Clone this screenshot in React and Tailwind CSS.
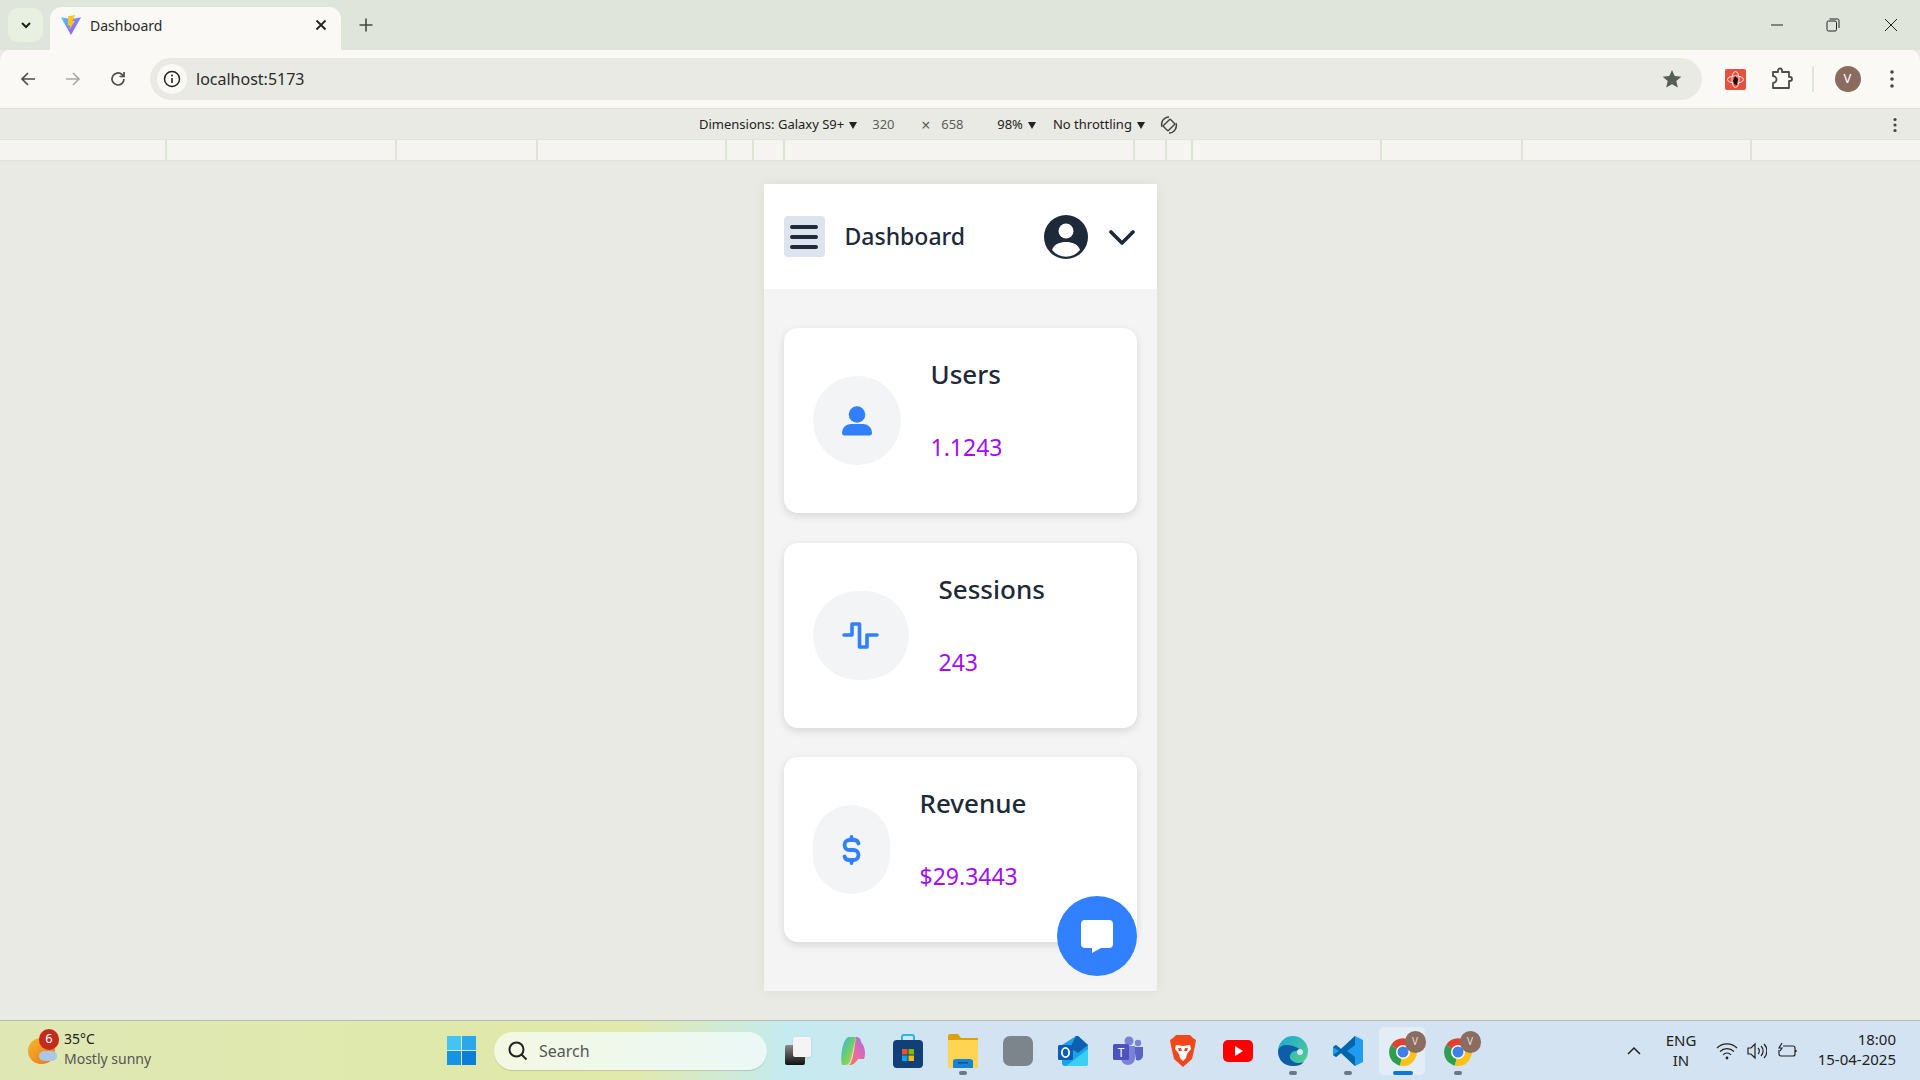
import React from 'react';

const rulerCells = [167, 230, 141, 189, 27, 31, 350, 32, 26, 189, 141, 229];

const ViteLogo = () => (
    <svg width="22" height="22" viewBox="0 0 24 24">
        <defs>
            <linearGradient id="vite-a" x1="0" y1="0" x2="1" y2="1">
                <stop offset="0" stopColor="#41d1ff" />
                <stop offset="1" stopColor="#bd34fe" />
            </linearGradient>
        </defs>
        <path d="M1 3.5 12 23 23 3.5 12 5.5Z" fill="url(#vite-a)" />
        <path d="M16.5 1 9 2.5l-.6 10 2.6-.6-.7 4.6 6-9-2.9.5Z" fill="#ffc517" />
    </svg>
);

const Chrome = () => (
    <svg width="32" height="32" viewBox="0 0 32 32">
        <path d="M16 16 4 9A14 14 0 0 1 28 9Z" fill="#e2412f" />
        <path d="M16 16 4 9A14 14 0 0 0 13 29.7Z" fill="#2f9e4f" />
        <path d="M16 16 28 9A14 14 0 0 1 13 29.7Z" fill="#fbc11b" />
        <circle cx="16" cy="16" r="7" fill="#fff" />
        <circle cx="16" cy="16" r="5.5" fill="#3f7fe8" />
    </svg>
);

const ChromeBadge = () => (
    <div className="relative flex h-[34px] w-[32px] items-end">
        <Chrome />
        <div className="absolute -right-[7px] -top-[3px] flex h-[22px] w-[21px] items-center justify-center rounded-full bg-[#8a6d60] text-[10px] text-[#e9ddd6]">V</div>
    </div>
);

const Copilot = () => (
    <svg width="30" height="30" viewBox="0 0 30 30">
        <defs>
            <linearGradient id="cop-a" x1="0" y1="0" x2="1" y2="1">
                <stop offset="0" stopColor="#2fb5e8" />
                <stop offset="0.5" stopColor="#6fcf6a" />
                <stop offset="1" stopColor="#f4c12e" />
            </linearGradient>
            <linearGradient id="cop-b" x1="1" y1="0" x2="0" y2="1">
                <stop offset="0" stopColor="#a56bf0" />
                <stop offset="0.6" stopColor="#ef6a9a" />
                <stop offset="1" stopColor="#f47a3c" />
            </linearGradient>
        </defs>
        <path d="M10 1h8l-5 22c-1 4-3 6-6 6H4C2 22 4 5 10 1Z" fill="url(#cop-a)" />
        <path d="M18 1c3 0 5 2 5 5 4 4 5 12 3 17h-6c-3 5-6 6-9 6 3-2 4-7 7-28Z" fill="url(#cop-b)" />
    </svg>
);

const Store = () => (
    <svg width="30" height="34" viewBox="0 0 30 34">
        <path d="M9 7V3a2 2 0 0 1 2-2h8a2 2 0 0 1 2 2v4" fill="none" stroke="#2fb4e8" strokeWidth="2" />
        <rect y="6" width="30" height="28" rx="4" fill="#123f78" />
        <rect x="9" y="15" width="5.5" height="5.5" fill="#f25022" />
        <rect x="15.5" y="15" width="5.5" height="5.5" fill="#7fba00" />
        <rect x="9" y="21.5" width="5.5" height="5.5" fill="#00a4ef" />
        <rect x="15.5" y="21.5" width="5.5" height="5.5" fill="#ffb900" />
    </svg>
);

const Folder = () => (
    <svg width="30" height="34" viewBox="0 0 30 34">
        <path d="M0 2a2 2 0 0 1 2-2h8l3 4h17v8H0Z" fill="#dca20e" />
        <rect y="6" width="30" height="28" rx="1" fill="#fdd552" />
        <path d="M5 34v-6a3 3 0 0 1 3-3h14a3 3 0 0 1 3 3v6Z" fill="#1583d8" />
        <rect x="10" y="28" width="10" height="1.5" fill="#0c4f8a" />
    </svg>
);

const Outlook = () => (
    <svg width="30" height="32" viewBox="0 0 30 32">
        <path d="M4 10 18 1h2l10 9v18a3 3 0 0 1-3 3H7a3 3 0 0 1-3-3Z" fill="#1aa3e8" />
        <path d="M18 1h2l10 9-10 8-8-5Z" fill="#0f5fb0" />
        <path d="M8 31 30 14v14a3 3 0 0 1-3 3Z" fill="#3ad0f5" />
        <rect y="10" width="15" height="15" rx="1.5" fill="#0b5cb5" />
        <ellipse cx="7.5" cy="17.5" rx="3.6" ry="4.6" fill="none" stroke="#fff" strokeWidth="1.8" />
    </svg>
);

const Teams = () => (
    <svg width="30" height="30" viewBox="0 0 30 30">
        <circle cx="25" cy="7" r="3.2" fill="#7b83d8" />
        <circle cx="16" cy="5" r="4.5" fill="#7b83d8" />
        <path d="M21 11h9v9a5 5 0 0 1-7 4Z" fill="#5a62c3" />
        <path d="M8 10h14v12a7 7 0 0 1-14 0Z" fill="#7b83d8" />
        <rect y="8" width="16" height="16" rx="1.5" fill="#4b53bc" />
        <text x="8" y="21" textAnchor="middle" fontSize="12" fill="#fff" fontFamily="Noto Sans, sans-serif">T</text>
    </svg>
);

const Brave = () => (
    <svg width="26" height="32" viewBox="0 0 26 32">
        <path d="M6 0h14l3 3 3 2-1 6-3 13-9 8-9-8L1 11 0 5l3-2Z" fill="#f1471d" />
        <path d="M6 10c3 0 5 1 7 1s4-1 7-1l1 4-4 5-1 4-3 3-3-3-1-4-4-5Z" fill="#fff" />
        <path d="M8 13h3l1 3H9ZM18 13h-3l-1 3h3Z" fill="#f1471d" />
    </svg>
);

const YouTube = () => (
    <svg width="30" height="22" viewBox="0 0 30 22">
        <rect width="30" height="22" rx="5" fill="#ff0000" />
        <path d="M12 6l8 5-8 5Z" fill="#fff" />
    </svg>
);

const Edge = () => (
    <svg width="30" height="32" viewBox="0 0 30 32">
        <defs>
            <linearGradient id="edge-a" x1="0" y1="0" x2="1" y2="1">
                <stop offset="0" stopColor="#1aa8d8" />
                <stop offset="1" stopColor="#57d186" />
            </linearGradient>
        </defs>
        <circle cx="15" cy="16" r="15" fill="url(#edge-a)" />
        <path d="M0 16C0 26 7 31 15 31c5 0 8-1 11-4-5 2-12 1-14-4-1-4 3-8 8-7 2 0 2-2 0-3C12 9 2 8 0 16Z" fill="#0f5ca8" />
        <circle cx="22" cy="17" r="3" fill="#dbe6f2" />
    </svg>
);

const VSCode = () => (
    <svg width="30" height="30" viewBox="0 0 30 30">
        <path d="M22 0 30 4v22l-8 4-14-13-5 4-3-2v-8l3-2 5 4Z" fill="#1f9cf0" />
        <path d="M22 0 8 13 3 9 0 11l6 4-6 4 3 2 5-4 14 13V21l-8-6 8-6Z" fill="#0065a9" />
    </svg>
);

const Divider = () => <div className="ml-[19px] mr-[21px] h-[26px] w-[1.5px] bg-[#dfe7d8]" />;

const TitleBar = () => (
    <div className="flex h-[50px] items-end bg-[#dfe5db]">
        <div className="mb-[8px] ml-[8px] flex h-[34px] w-[35px] items-center justify-center rounded-[10px] bg-[#e8f1e1]">
            <svg width="14" height="14" viewBox="0 0 14 14"><path d="M3 5l4 4 4-4" fill="none" stroke="#1f1f1f" strokeWidth="2" /></svg>
        </div>
        <div className="ml-[7px] flex h-[43px] w-[291px] items-center rounded-t-[12px] bg-[#fbf9f5] pb-[7px] pl-[10px] pr-[13px]">
            <ViteLogo />
            <span className="ml-[8px] flex-1 text-[14px] text-[#2a2a2a]">Dashboard</span>
            <svg width="14" height="14" viewBox="0 0 14 14"><path d="M2.5 2.5l9 9M11.5 2.5l-9 9" stroke="#222" strokeWidth="1.8" /></svg>
        </div>
        <div className="mb-[8px] ml-[17px] flex h-[34px] items-center">
            <svg width="16" height="16" viewBox="0 0 16 16"><path d="M8 1.5v13M1.5 8h13" stroke="#444a42" strokeWidth="1.6" /></svg>
        </div>
        <div className="mb-[8px] ml-auto flex h-[34px] items-center">
            <svg width="14" height="14" viewBox="0 0 14 14"><path d="M1 7h12" stroke="#222" strokeWidth="1" /></svg>
            <svg className="ml-[42px]" width="14" height="14" viewBox="0 0 14 14"><rect x="1" y="3" width="9.5" height="10" rx="1.5" fill="none" stroke="#222" /><path d="M3.5 1h8a1.5 1.5 0 0 1 1.5 1.5V10" fill="none" stroke="#222" /></svg>
            <svg className="ml-[44px] mr-[22px]" width="14" height="14" viewBox="0 0 14 14"><path d="M1 1l12 12M13 1L1 13" stroke="#222" strokeWidth="1" /></svg>
        </div>
    </div>
);

const Toolbar = () => (
    <div className="flex h-[58px] items-center rounded-t-[10px] bg-[#fbf9f5] pl-[19px] pr-[20px]">
        <svg width="18" height="18" viewBox="0 0 18 18"><path d="M16 9H3M9 3L3 9l6 6" fill="none" stroke="#4a4f49" strokeWidth="1.7" /></svg>
        <svg className="ml-[27px]" width="18" height="18" viewBox="0 0 18 18"><path d="M2 9h13M9 3l6 6-6 6" fill="none" stroke="#a9aca6" strokeWidth="1.7" /></svg>
        <svg className="ml-[27px]" width="18" height="18" viewBox="0 0 18 18"><path d="M15 9a6 6 0 1 1-2-4.5L15 6.5M15 2v4.5h-4.5" fill="none" stroke="#4a4f49" strokeWidth="1.7" /></svg>
        <div className="ml-[23px] flex h-[42px] w-[1552px] items-center rounded-full bg-[#e9eae4] pl-[7px] pr-[20px]">
            <div className="flex h-[30px] w-[30px] items-center justify-center rounded-full bg-[#fbf9f5]">
                <svg width="18" height="18" viewBox="0 0 18 18"><circle cx="9" cy="9" r="7.5" fill="none" stroke="#222" strokeWidth="1.5" /><path d="M9 8v5" stroke="#222" strokeWidth="1.6" /><circle cx="9" cy="5.5" r="1" fill="#222" /></svg>
            </div>
            <span className="ml-[9px] flex-1 text-[16px] text-[#2b2b2b]">localhost:5173</span>
            <svg width="20" height="20" viewBox="0 0 20 20"><path d="M10 1l2.7 6.1 6.6.6-5 4.4 1.5 6.5L10 15.2l-5.8 3.4 1.5-6.5-5-4.4 6.6-.6Z" fill="#565f52" /></svg>
        </div>
        <div className="ml-[23px] flex h-[21px] w-[21px] items-center justify-center rounded-[2px] bg-[#e4513f]">
            <svg width="19" height="19" viewBox="0 0 19 19">
                <ellipse cx="9.5" cy="9.5" rx="8" ry="3.6" fill="none" stroke="#fbe3de" strokeWidth="1" />
                <ellipse cx="9.5" cy="9.5" rx="3.6" ry="8" fill="none" stroke="#fbe3de" strokeWidth="1" />
                <path d="M9 6l3 3-1 6-3-1-1-3Z" fill="#1c1010" />
            </svg>
        </div>
        <svg className="ml-[25px]" width="22" height="24" viewBox="0 0 22 24"><path d="M2 5h5V3.500a2 2 0 0 1 4 0V5h7v5h1a2 2 0 0 1 0 4h-1v7H2v-5a3.500 3.500 0 0 0 0-7Z" fill="none" stroke="#4a4f49" strokeWidth="1.8" strokeLinejoin="round" /></svg>
        <Divider />
        <div className="flex h-[26px] w-[26px] items-center justify-center rounded-full bg-[#8a6b5f] text-[13px] text-white">V</div>
        <svg className="ml-[28px]" width="6" height="20" viewBox="0 0 6 20"><circle cx="3" cy="3" r="1.800" fill="#444a42" /><circle cx="3" cy="10" r="1.800" fill="#444a42" /><circle cx="3" cy="17" r="1.800" fill="#444a42" /></svg>
    </div>
);

const Caret = () => <span className="ml-[5px] h-0 w-0 border-x-[4.5px] border-t-[7px] border-x-transparent border-t-[#222]" />;

const DevBar = () => (
    <div className="flex h-[31px] items-center border-t border-[#dfe0da] bg-[#e9eae4] pl-[699px] pr-[22px] pt-[2px] text-[13px] text-[#222]">
        <span>Dimensions: Galaxy S9+</span>
        <Caret />
        <span className="ml-[15px] w-[44px] text-[#5c5e5a]">320</span>
        <span className="ml-[5px] w-[20px] text-[16px] leading-none text-[#5c5e5a]">×</span>
        <span className="w-[56px] text-[#5c5e5a]">658</span>
        <span>98%</span>
        <Caret />
        <span className="ml-[17px]">No throttling</span>
        <Caret />
        <svg className="ml-[14px]" width="20" height="20" viewBox="0 0 20 20"><rect x="6.500" y="5" width="7" height="10" rx="1" transform="rotate(45 10 10)" fill="none" stroke="#444" strokeWidth="1.400" /><path d="M3 12a7.500 7.500 0 0 1 7-10M17 8a7.500 7.500 0 0 1-7 10" fill="none" stroke="#444" strokeWidth="1.400" /></svg>
        <svg className="ml-auto" width="6" height="16" viewBox="0 0 6 16"><circle cx="3" cy="2.500" r="1.600" fill="#444" /><circle cx="3" cy="8" r="1.600" fill="#444" /><circle cx="3" cy="13.500" r="1.600" fill="#444" /></svg>
    </div>
);

const Ruler = () => (
    <div className="flex h-[22px] border-y border-[#dfe6d9] bg-[#f5f4f0]">
        {rulerCells.map((w, i) => (
            <div key={i} className="border-r-2 border-[#dbe5d4]" style={{ width: w }} />
        ))}
    </div>
);

const UserIcon = () => (
    <svg width="30" height="30" viewBox="0 0 30 30" fill="#3080ff">
        <circle cx="15" cy="8.500" r="8.300" />
        <path d="M0 27c0-6 5-9 9-9h12c4 0 9 3 9 9 0 1.500-1 2.500-2.500 2.500h-25C1 29.500 0 28.500 0 27Z" />
    </svg>
);

const PulseIcon = () => (
    <svg width="37" height="27" viewBox="0 0 37 27" fill="none" stroke="#3080ff" strokeWidth="3.600" strokeLinecap="round" strokeLinejoin="round">
        <path d="M2 13h8V2h7.500v23H25V13h10" />
    </svg>
);

const DollarIcon = () => (
    <svg width="19" height="30" viewBox="0 0 19 30" fill="none" stroke="#3080ff" strokeWidth="3.800" strokeLinecap="round" strokeLinejoin="round">
        <path d="M16.500 8.500C16 6.500 14 5 12 5H7.500a5 5 0 0 0 0 10h4a5 5 0 0 1 0 10H7C5 25 3 23.500 2.500 21.500M9.500 2v3M9.500 25v3" />
    </svg>
);

const stats = [
    { title: 'Users', value: '1.1243', icon: <UserIcon />, circle: 'w-[88px]' },
    { title: 'Sessions', value: '243', icon: <PulseIcon />, circle: 'w-[96px]' },
    { title: 'Revenue', value: '$29.3443', icon: <DollarIcon />, circle: 'w-[77px]' },
];

const StatCard = ({ title, value, icon, circle }) => (
    <div className="flex h-[185px] items-center rounded-[14px] bg-white pl-[29px] shadow-[0_3px_8px_rgba(0,0,0,0.12)]">
        <div className={`flex h-[89px] items-center justify-center rounded-full bg-[#f3f4f6] ${circle}`}>{icon}</div>
        <div className="ml-[30px] flex h-full flex-col pt-[28px]">
            <div className="h-[36px] text-[26px] font-medium leading-[36px] text-[#1e2939]">{title}</div>
            <div className="mt-[37px] h-[36px] text-[23px] leading-[36px] text-[#a20cff]">{value}</div>
        </div>
    </div>
);

const PhoneHeader = () => (
    <div className="flex h-[105px] items-center bg-white pl-[20px] pr-[22px]">
        <div className="flex h-[41px] w-[41px] items-center justify-center rounded-[4px] bg-[#dde4ee]">
            <svg width="28" height="24" viewBox="0 0 28 24" stroke="#1e2939" strokeWidth="4" strokeLinecap="round"><path d="M2 2h24M2 12h24M2 22h24" /></svg>
        </div>
        <span className="ml-[20px] flex-1 text-[23px] font-medium text-[#1e2939]">Dashboard</span>
        <svg width="44" height="44" viewBox="0 0 44 44">
            <circle cx="22" cy="22" r="22" fill="#1e2939" />
            <circle cx="22" cy="16" r="7.500" fill="#fff" />
            <path d="M8 35c2-6 8-8 14-8s12 2 14 8a18 18 0 0 1-28 0Z" fill="#fff" />
        </svg>
        <svg className="ml-[21px] mt-[3px]" width="26" height="16" viewBox="0 0 26 16"><path d="M2 2l11 11L24 2" fill="none" stroke="#1e2939" strokeWidth="3.600" strokeLinecap="round" strokeLinejoin="round" /></svg>
    </div>
);

const Phone = () => (
    <div className="relative h-[807px] w-[393px] bg-[#f4f4f4] shadow-[0_0_12px_rgba(0,0,0,0.06)]">
        <PhoneHeader />
        <div className="flex flex-col gap-[29.5px] px-[20px] pt-[39px]">
            {stats.map((s) => <StatCard key={s.title} {...s} />)}
        </div>
        <div className="absolute bottom-[15px] right-[20px] flex h-[80px] w-[80px] items-center justify-center rounded-full bg-[#3080ff]">
            <svg width="32" height="33" viewBox="0 0 32 33"><path d="M4 0h24a4 4 0 0 1 4 4v20a4 4 0 0 1-4 4H20l-9 5v-5H4a4 4 0 0 1-4-4V4a4 4 0 0 1 4-4Z" fill="#fff" /></svg>
        </div>
    </div>
);

const TaskIcon = ({ children, dot }) => (
    <div className="relative flex h-[60px] w-[55px] items-center justify-center">
        {children}
        {dot && <div className="absolute bottom-[6px] h-[4px] w-[8px] rounded-full bg-[#6f7880]" />}
    </div>
);

const Taskbar = () => (
    <div className="flex h-[60px] items-center border-t border-[#b7c0b6] bg-[linear-gradient(90deg,#dfe8b4_0%,#e0e9a9_30%,#e2e9ad_33%,#c4ebf0_41%,#d4e3f1_50%,#d4e3f2_100%)] pl-[28px] pr-[24px]">
        <div className="relative h-[26px] w-[27px]">
            <div className="h-[26px] w-[27px] rounded-full bg-[linear-gradient(135deg,#f5b92c,#ec6f1c)]" />
            <div className="absolute bottom-[3px] right-[-2px] h-[10px] w-[18px] rounded-full bg-[#a9c8e6]" />
            <div className="absolute left-[11px] top-[-9px] flex h-[21px] w-[20px] items-center justify-center rounded-full bg-[#c42b1c] text-[13px] text-white">6</div>
        </div>
        <div className="-mt-[3px] ml-[9px] w-[100px] text-[14px] leading-[20px]">
            <div className="text-[#222]">35°C</div>
            <div className="text-[#555]">Mostly sunny</div>
        </div>
        <div className="ml-[283px] grid h-[29px] w-[29px] grid-cols-2 gap-[1px]">
            <div className="bg-[#45c3f5]" />
            <div className="bg-[#2aa8ea]" />
            <div className="bg-[#1593e4]" />
            <div className="bg-[#0a7fd9]" />
        </div>
        <div className="ml-[18px] flex h-[38px] w-[273px] items-center rounded-full bg-[linear-gradient(90deg,#f3f8e2,#ebf8f6)] pl-[13px] shadow-[0_1px_1px_rgba(0,0,0,0.15)]">
            <svg width="22" height="22" viewBox="0 0 22 22"><circle cx="9.500" cy="9.500" r="7" fill="none" stroke="#222" strokeWidth="2" /><path d="M14.500 14.500l5 5" stroke="#222" strokeWidth="2" /></svg>
            <span className="ml-[10px] text-[16px] text-[#555]">Search</span>
        </div>
        <div className="ml-[3px] flex items-center">
            <TaskIcon>
                <div className="relative h-[28px] w-[26px]">
                    <div className="absolute bottom-0 left-0 h-[20px] w-[20px] rounded-[2px] bg-[linear-gradient(180deg,#8a8a8a,#111)]" />
                    <div className="absolute right-0 top-0 h-[20px] w-[18px] rounded-[2px] bg-[#f4f4f4] shadow-sm" />
                </div>
            </TaskIcon>
            <TaskIcon><Copilot /></TaskIcon>
            <TaskIcon><Store /></TaskIcon>
            <TaskIcon dot><Folder /></TaskIcon>
            <TaskIcon><div className="h-[30px] w-[30px] rounded-[7px] bg-[#7c858b]" /></TaskIcon>
            <TaskIcon><Outlook /></TaskIcon>
            <TaskIcon><Teams /></TaskIcon>
            <TaskIcon><Brave /></TaskIcon>
            <TaskIcon><YouTube /></TaskIcon>
            <TaskIcon dot><Edge /></TaskIcon>
            <TaskIcon dot><VSCode /></TaskIcon>
            <div className="relative flex h-[60px] w-[55px] items-center justify-center">
                <div className="absolute left-[4px] top-[6px] h-[48px] w-[46px] rounded-[5px] bg-[#e3edf7]" />
                <div className="relative"><ChromeBadge /></div>
                <div className="absolute bottom-[6px] h-[4px] w-[20px] rounded-full bg-[#0a78d4]" />
            </div>
            <TaskIcon dot><ChromeBadge /></TaskIcon>
        </div>
        <div className="ml-auto flex items-center text-[#222]">
            <svg width="16" height="10" viewBox="0 0 16 10"><path d="M2 8l6-6 6 6" fill="none" stroke="#222" strokeWidth="1.500" /></svg>
            <div className="-mt-[1px] ml-[21px] w-[36px] text-center text-[15px] leading-[20px]">ENG<br />IN</div>
            <svg className="ml-[17px]" width="22" height="18" viewBox="0 0 22 18" fill="none" stroke="#222" strokeWidth="1.200"><path d="M1 6a14 14 0 0 1 20 0M4 9.500a10 10 0 0 1 14 0M7 13a5 5 0 0 1 8 0" /><circle cx="11" cy="16" r="1.400" fill="#222" stroke="none" /></svg>
            <svg className="ml-[9px]" width="20" height="18" viewBox="0 0 20 18" fill="none" stroke="#222" strokeWidth="1.200"><path d="M1 6h3l4-4v14l-4-4H1ZM11 6a4 4 0 0 1 0 6M14 4a7 7 0 0 1 0 10M17 2a10 10 0 0 1 0 14" /></svg>
            <svg className="ml-[10px]" width="20" height="16" viewBox="0 0 20 16" fill="none" stroke="#222" strokeWidth="1.200"><path d="M6 3h10a2 2 0 0 1 2 2v6a2 2 0 0 1-2 2H4a2 2 0 0 1-2-2V7M19 7v2" /><path d="M5 0L2 5h3l-2 3" /></svg>
            <div className="-mt-[3px] ml-[15px] w-[84px] text-right text-[15px] leading-[20px]">18:00<br />15-04-2025</div>
        </div>
    </div>
);

const App = () => (
    <div className="flex h-screen w-full flex-col overflow-hidden bg-[#e9eae4] font-['Noto_Sans',sans-serif]">
        <TitleBar />
        <Toolbar />
        <DevBar />
        <Ruler />
        <main className="flex flex-1 justify-center pt-[23px]">
            <Phone />
        </main>
        <Taskbar />
    </div>
);

export default App;
